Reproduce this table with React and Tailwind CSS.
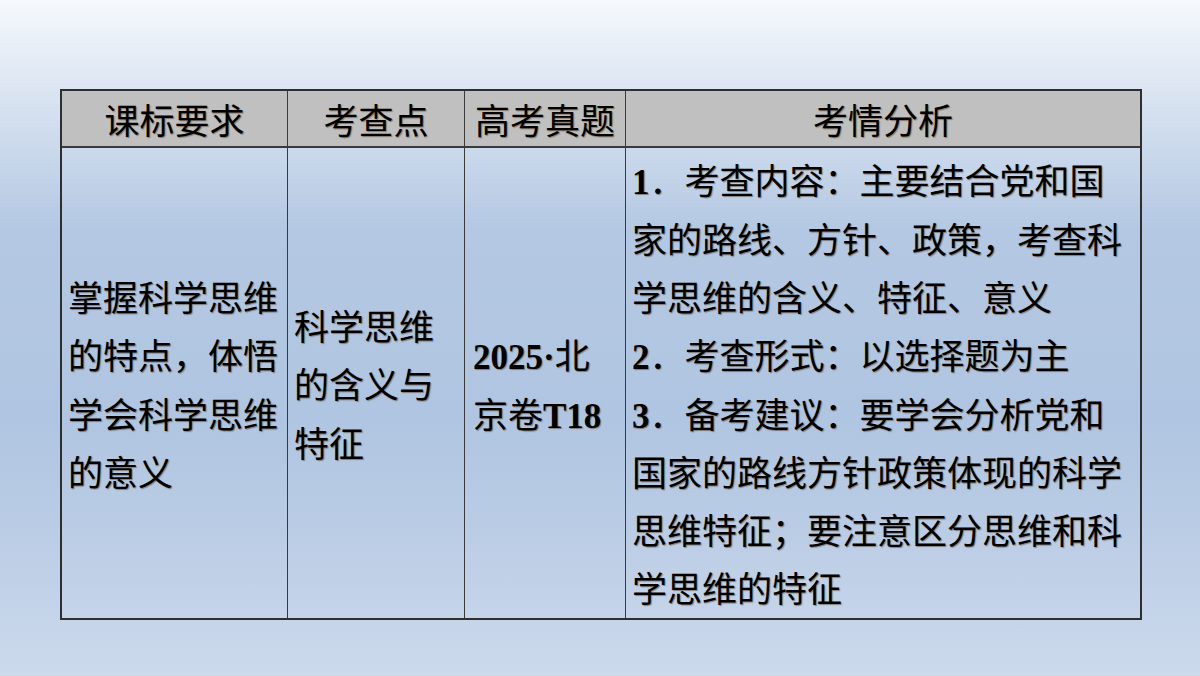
import React from "react";

const font = {
  fontFamily: '"Liberation Serif", "Noto Sans CJK SC", serif',
};

const shadow = "[text-shadow:1px_1px_1px_rgba(60,30,0,0.45)]";

function Num({ n }) {
  return <span className="font-bold">{n}</span>;
}

const headers = ["课标要求", "考查点", "高考真题", "考情分析"];

export default function App() {
  return (
    <div
      className="h-[676px] w-[1200px] overflow-hidden bg-[linear-gradient(180deg,#f6f9fd_0%,#dae4f1_14%,#b4c8e3_34%,#b0c5e1_62%,#bdcee6_82%,#ccdaec_100%)] pl-[60px] pt-[89px]"
      style={font}
    >
      <div
        className={`grid w-fit grid-cols-[226px_177px_161px_514px] grid-rows-[57px_470px] border-2 border-[#2e2e2e] text-[35px] leading-[58.3px] text-black ${shadow}`}
      >
        {headers.map((h, i) => (
          <div
            key={h}
            className={`flex items-center justify-center border-b-2 border-[#3a3a3a] bg-[#c0c0c0] pt-[9px] ${
              i < 3 ? "border-r border-r-[#3a3a3a]" : ""
            }`}
          >
            {h}
          </div>
        ))}

        <div className="flex flex-col justify-center whitespace-nowrap border-r border-[#3a3a3a] pl-[6px] pt-[9px]">
          <span>掌握科学思维</span>
          <span>的特点，体悟</span>
          <span>学会科学思维</span>
          <span>的意义</span>
        </div>

        <div className="flex flex-col justify-center whitespace-nowrap border-r border-[#3a3a3a] pl-[6px] pt-[9px]">
          <span>科学思维</span>
          <span>的含义与</span>
          <span>特征</span>
        </div>

        <div className="flex flex-col justify-center whitespace-nowrap border-r border-[#3a3a3a] pl-[8px] pt-[9px]">
          <span>
            <span className="font-bold">2025·</span>北
          </span>
          <span>
            京卷<span className="font-bold">T18</span>
          </span>
        </div>

        <div className="flex flex-col justify-center whitespace-nowrap pl-[6px] pt-[9px]">
          <span>
            <Num n="1" />．考查内容：主要结合党和国
          </span>
          <span>家的路线、方针、政策，考查科</span>
          <span>学思维的含义、特征、意义</span>
          <span>
            <Num n="2" />．考查形式：以选择题为主
          </span>
          <span>
            <Num n="3" />．备考建议：要学会分析党和
          </span>
          <span>国家的路线方针政策体现的科学</span>
          <span>思维特征；要注意区分思维和科</span>
          <span>学思维的特征</span>
        </div>
      </div>
    </div>
  );
}
